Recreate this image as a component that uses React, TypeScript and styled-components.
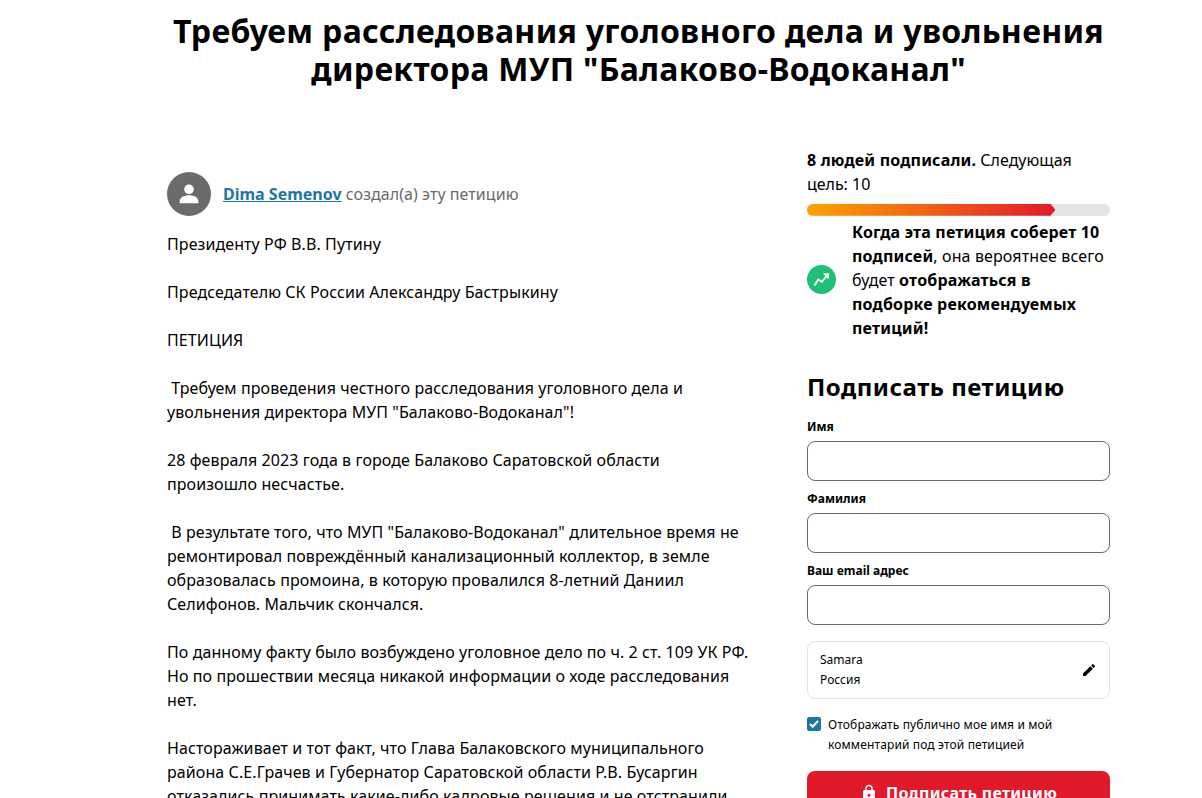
import { ReactNode } from 'react';
import styled, { createGlobalStyle } from 'styled-components';
import { MdEdit, MdLock } from 'react-icons/md';

const GlobalStyle = createGlobalStyle`
  * {
    box-sizing: border-box;
    margin: 0;
    padding: 0;
  }

  body {
    background: #fff;
    color: #000;
    font-family: 'Noto Sans', sans-serif;
    font-size: 16px;
    line-height: 24px;
    overflow: hidden;
  }
`;

const Page = styled.main`
  width: 943px;
  height: 798px;
  margin-left: 167px;
  padding-top: 12px;
  overflow: hidden;
`;

const Title = styled.h1`
  font-size: 32px;
  font-weight: 700;
  letter-spacing: 0.3px;
  line-height: 38.4px;
  text-align: center;
  white-space: nowrap;
`;

const Columns = styled.div`
  display: grid;
  grid-template-columns: 590px 303px;
  justify-content: space-between;
  margin-top: 59px;
`;

const Article = styled.article`
  padding-top: 24px;
`;

const Author = styled.div`
  display: flex;
  align-items: center;
  gap: 12px;
  margin-bottom: 16px;
  color: #6b6b6b;
  letter-spacing: 0.06px;
`;

const Avatar = styled.div`
  display: flex;
  align-items: center;
  justify-content: center;
  width: 44px;
  height: 44px;
  border-radius: 50%;
  background: #6b6b6b;
`;

const AuthorLink = styled.a`
  color: #1d76a7;
  font-weight: 700;
  letter-spacing: 0;
  text-decoration: underline;
`;

const Paragraph = styled.p`
  margin-bottom: 24px;
  letter-spacing: 0.09px;
  white-space: pre;
`;

const Sidebar = styled.aside`
  display: flex;
  flex-direction: column;

  b {
    letter-spacing: 0.18px;
  }
`;

const ProgressTrack = styled.div`
  height: 12px;
  margin: 8px 0 4px;
  border-radius: 6px;
  background: #e3e3e3;
  overflow: hidden;
`;

const ProgressFill = styled.div<{ $percent: number }>`
  width: ${({ $percent }) => $percent}%;
  height: 100%;
  background: linear-gradient(90deg, #ffa300, #e11a2b);
  clip-path: polygon(0 0, calc(100% - 5px) 0, 100% 50%, calc(100% - 5px) 100%, 0 100%);
`;

const Goal = styled.div`
  display: flex;
  align-items: center;
  gap: 16px;
  letter-spacing: 0.12px;
  white-space: nowrap;
`;

const GoalIcon = styled.div`
  display: flex;
  flex-shrink: 0;
  align-items: center;
  justify-content: center;
  width: 29px;
  height: 29px;
  border-radius: 50%;
  background: #1fbf75;
`;

const FormTitle = styled.h2`
  margin-top: 31px;
  font-size: 24px;
  font-weight: 700;
  letter-spacing: 0.5px;
  line-height: 31px;
`;

const Label = styled.label`
  display: block;
  margin-top: 16px;
  font-size: 12px;
  font-weight: 700;
  line-height: 18px;

  & ~ & {
    margin-top: 9px;
  }
`;

const Input = styled.input`
  display: block;
  width: 100%;
  height: 40px;
  margin-top: 5px;
  padding: 0 12px;
  border: 1px solid #6b6b6b;
  border-radius: 8px;
  background: #fff;
  font: inherit;
`;

const Location = styled.div`
  display: flex;
  align-items: center;
  justify-content: space-between;
  height: 58px;
  margin-top: 16px;
  padding: 0 12px;
  border: 1px solid #e3e3e3;
  border-radius: 8px;
  font-size: 12px;
  line-height: 20px;
`;

const Consent = styled.div`
  display: flex;
  gap: 7px;
  margin-top: 16px;
  font-size: 12px;
  letter-spacing: 0.13px;
  line-height: 20px;
  white-space: nowrap;
`;

const Checkbox = styled.span`
  display: flex;
  align-items: center;
  justify-content: center;
  width: 14px;
  height: 14px;
  margin-top: 2px;
  border-radius: 2px;
  background: #1d76a7;
`;

const SignButton = styled.button`
  display: flex;
  align-items: center;
  justify-content: center;
  gap: 8px;
  height: 44px;
  margin-top: 16px;
  border: 0;
  border-radius: 8px;
  background: #e11a2b;
  color: #fff;
  font: inherit;
  font-weight: 700;
  letter-spacing: 0.3px;
`;

const paragraphs = [
  'Президенту РФ В.В. Путину',
  'Председателю СК России Александру Бастрыкину',
  'ПЕТИЦИЯ',
  ' Требуем проведения честного расследования уголовного дела и\nувольнения директора МУП "Балаково-Водоканал"!',
  '28 февраля 2023 года в городе Балаково Саратовской области\nпроизошло несчастье.',
  ' В результате того, что МУП "Балаково-Водоканал" длительное время не\nремонтировал повреждённый канализационный коллектор, в земле\nобразовалась промоина, в которую провалился 8-летний Даниил\nСелифонов. Мальчик скончался.',
  'По данному факту было возбуждено уголовное дело по ч. 2 ст. 109 УК РФ.\nНо по прошествии месяца никакой информации о ходе расследования\nнет.',
  'Настораживает и тот факт, что Глава Балаковского муниципального\nрайона С.Е.Грачев и Губернатор Саратовской области Р.В. Бусаргин\nотказались принимать какие-либо кадровые решения и не отстранили',
];

const Field = ({ id, children }: { id: string; children: ReactNode }) => (
  <>
    <Label htmlFor={id}>{children}</Label>
    <Input id={id} />
  </>
);

const App = () => {
  return (
    <>
      <GlobalStyle />
      <Page>
        <Title>
          Требуем расследования уголовного дела и увольнения
          <br />
          директора МУП "Балаково-Водоканал"
        </Title>
        <Columns>
          <Article>
            <Author>
              <Avatar>
                <svg width="20" height="20" viewBox="0 0 20 20" fill="#fff">
                  <circle cx="10" cy="5.4" r="4.800" />
                  <path d="M.7 19.300v-2c0-4 4.500-6 9.300-6s9.300 2 9.300 6v2z" />
                </svg>
              </Avatar>
              <p>
                <AuthorLink>Dima Semenov</AuthorLink> создал(а) эту петицию
              </p>
            </Author>
            {paragraphs.map((text) => (
              <Paragraph key={text}>{text}</Paragraph>
            ))}
          </Article>
          <Sidebar>
            <p>
              <b>8 людей подписали.</b> Следующая
              <br />
              цель: 10
            </p>
            <ProgressTrack>
              <ProgressFill $percent={82} />
            </ProgressTrack>
            <Goal>
              <GoalIcon>
                <svg width="17" height="15" viewBox="0 0 17 15" fill="none">
                  <path d="M1.500 13.500L5.200 7.500l3.800 2.300L13.500 4" stroke="#fff" strokeWidth="1.900" />
                  <path d="M10 1.500l6.300-.3-.8 6.300z" fill="#fff" />
                </svg>
              </GoalIcon>
              <p>
                <b>Когда эта петиция соберет 10</b>
                <br />
                <b>подписей</b>, она вероятнее всего
                <br />
                будет <b>отображаться в</b>
                <br />
                <b>подборке рекомендуемых</b>
                <br />
                <b>петиций!</b>
              </p>
            </Goal>
            <FormTitle>Подписать петицию</FormTitle>
            <Field id="first-name">Имя</Field>
            <Field id="last-name">Фамилия</Field>
            <Field id="email">Ваш email адрес</Field>
            <Location>
              <p>
                Samara
                <br />
                Россия
              </p>
              <MdEdit size={16} />
            </Location>
            <Consent>
              <Checkbox>
                <svg width="10" height="8" viewBox="0 0 10 8" fill="none" stroke="#fff" strokeWidth="2">
                  <path d="M1 4l2.700 2.700L9 1" />
                </svg>
              </Checkbox>
              <p>
                Отображать публично мое имя и мой
                <br />
                комментарий под этой петицией
              </p>
            </Consent>
            <SignButton>
              <MdLock size={18} />
              Подписать петицию
            </SignButton>
          </Sidebar>
        </Columns>
      </Page>
    </>
  );
};

export default App;
